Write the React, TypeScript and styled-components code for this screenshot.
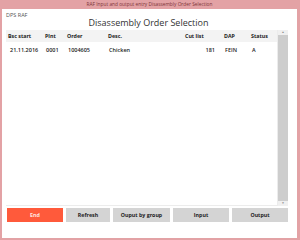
import styled, { createGlobalStyle } from 'styled-components';

const GlobalStyle = createGlobalStyle`
  html, body {
    margin: 0;
    padding: 0;
    background: #ffffff;
  }
  body {
    font-family: 'Open Sans', 'Noto Sans', sans-serif;
  }
`;

type Col = { key: string; label: string; right?: boolean; width: number };

const columns: Col[] = [
  { key: 'start', label: 'Bsc start', width: 37 },
  { key: 'plnt', label: 'Plnt', width: 22 },
  { key: 'order', label: 'Order', width: 41 },
  { key: 'desc', label: 'Desc.', width: 77 },
  { key: 'cut', label: 'Cut list', width: 39, right: true },
  { key: 'dap', label: 'DAP', width: 27 },
  { key: 'status', label: 'Status', width: 20 },
];

const rows = [
  { start: '21.11.2016', plnt: '0001', order: '1004605', desc: 'Chicken', cut: '181', dap: 'FEIN', status: 'A' },
];

const buttons = [
  { label: 'End', width: 56, danger: true },
  { label: 'Refresh', width: 44 },
  { label: 'Ouput by group', width: 57 },
  { label: 'Input', width: 56 },
  { label: 'Output', width: 56 },
];

export default function App() {
  return (
    <>
      <GlobalStyle />
      <Window>
        <TitleBar>RAF Input and output entry Disassembly Order Selection</TitleBar>
        <Body>
          <AppName>DPS RAF</AppName>
          <Heading>Disassembly Order Selection</Heading>
          <ListArea>
            <Table>
              <HeaderRow>
                {columns.map((c) => (
                  <Cell key={c.key} $width={c.width}>
                    {c.label}
                  </Cell>
                ))}
              </HeaderRow>
              {rows.map((r, i) => (
                <DataRow key={i}>
                  {columns.map((c) => (
                    <Cell key={c.key} $width={c.width} $pad={c.key === 'start' ? 2 : 1}>
                      {c.right ? <RightText>{r[c.key as keyof typeof r]}</RightText> : r[c.key as keyof typeof r]}
                    </Cell>
                  ))}
                </DataRow>
              ))}
            </Table>
            <Scrollbar>
              <Arrow>▲</Arrow>
              <Thumb />
              <Arrow>▼</Arrow>
            </Scrollbar>
          </ListArea>
          <ButtonRow>
            {buttons.map((b) => (
              <Button key={b.label} $width={b.width} $danger={b.danger}>
                {b.label}
              </Button>
            ))}
          </ButtonRow>
        </Body>
      </Window>
    </>
  );
}

const Window = styled.div`
  width: 300px;
  height: 240px;
  box-sizing: border-box;
  background: #e3a2a5;
  padding: 0 3px 2px 2px;
  display: flex;
  flex-direction: column;
`;
const TitleBar = styled.div`
  height: 9px;
  line-height: 9px;
  font-size: 4.8px;
  color: #7d3438;
  text-align: center;
  white-space: nowrap;
`;
const Body = styled.div`
  flex: 1;
  background: #ffffff;
  display: flex;
  flex-direction: column;
  padding: 0 0 0 4px;
`;
const AppName = styled.div`
  height: 8px;
  margin-top: 2px;
  font-size: 5.5px;
  line-height: 8px;
  color: #555555;
`;
const Heading = styled.div`
  height: 11px;
  margin-top: -2px;
  font-size: 9px;
  line-height: 11px;
  color: #333333;
  text-align: center;
  padding-right: 6px;
  white-space: nowrap;
`;
const ListArea = styled.div`
  margin-top: 2px;
  width: 282px;
  height: 176px;
  display: flex;
`;
const Table = styled.div`
  flex: 1;
  display: flex;
  flex-direction: column;
  border-right: 1px solid #ececec;
  border-bottom: 1px solid #ececec;
`;
const HeaderRow = styled.div`
  display: flex;
  height: 12px;
  align-items: center;
  background: #f3f3f3;
  font-weight: 700;
  font-size: 5.3px;
  color: #222222;
  padding-left: 2px;
`;
const DataRow = styled.div`
  display: flex;
  height: 16px;
  align-items: center;
  font-weight: 600;
  font-size: 5.5px;
  color: #222222;
  padding-left: 2px;
`;
const Cell = styled.div<{ $width: number; $pad?: number }>`
  width: ${(p) => p.$width}px;
  flex: none;
  white-space: nowrap;
  padding-left: ${(p) => p.$pad ?? 0}px;
  box-sizing: border-box;
`;
const RightText = styled.span`
  display: inline-block;
  width: 29px;
  text-align: right;
`;
const Scrollbar = styled.div`
  width: 10px;
  display: flex;
  flex-direction: column;
  align-items: center;
  background: #f0f0f0;
`;
const Arrow = styled.div`
  height: 5px;
  font-size: 3px;
  line-height: 5px;
  color: #8a8a8a;
`;
const Thumb = styled.div`
  flex: 1;
  width: 10px;
  background: #cdcdcd;
`;
const ButtonRow = styled.div`
  display: flex;
  gap: 3px;
  margin-top: 2px;
  padding-left: 1px;
`;
const Button = styled.div<{ $width: number; $danger?: boolean }>`
  width: ${(p) => p.$width}px;
  height: 14px;
  line-height: 14px;
  text-align: center;
  font-size: 5.3px;
  font-weight: 700;
  background: ${(p) => (p.$danger ? '#ff5a3b' : '#d4d4d4')};
  color: ${(p) => (p.$danger ? '#ffe6e0' : '#222222')};
  white-space: nowrap;
`;
